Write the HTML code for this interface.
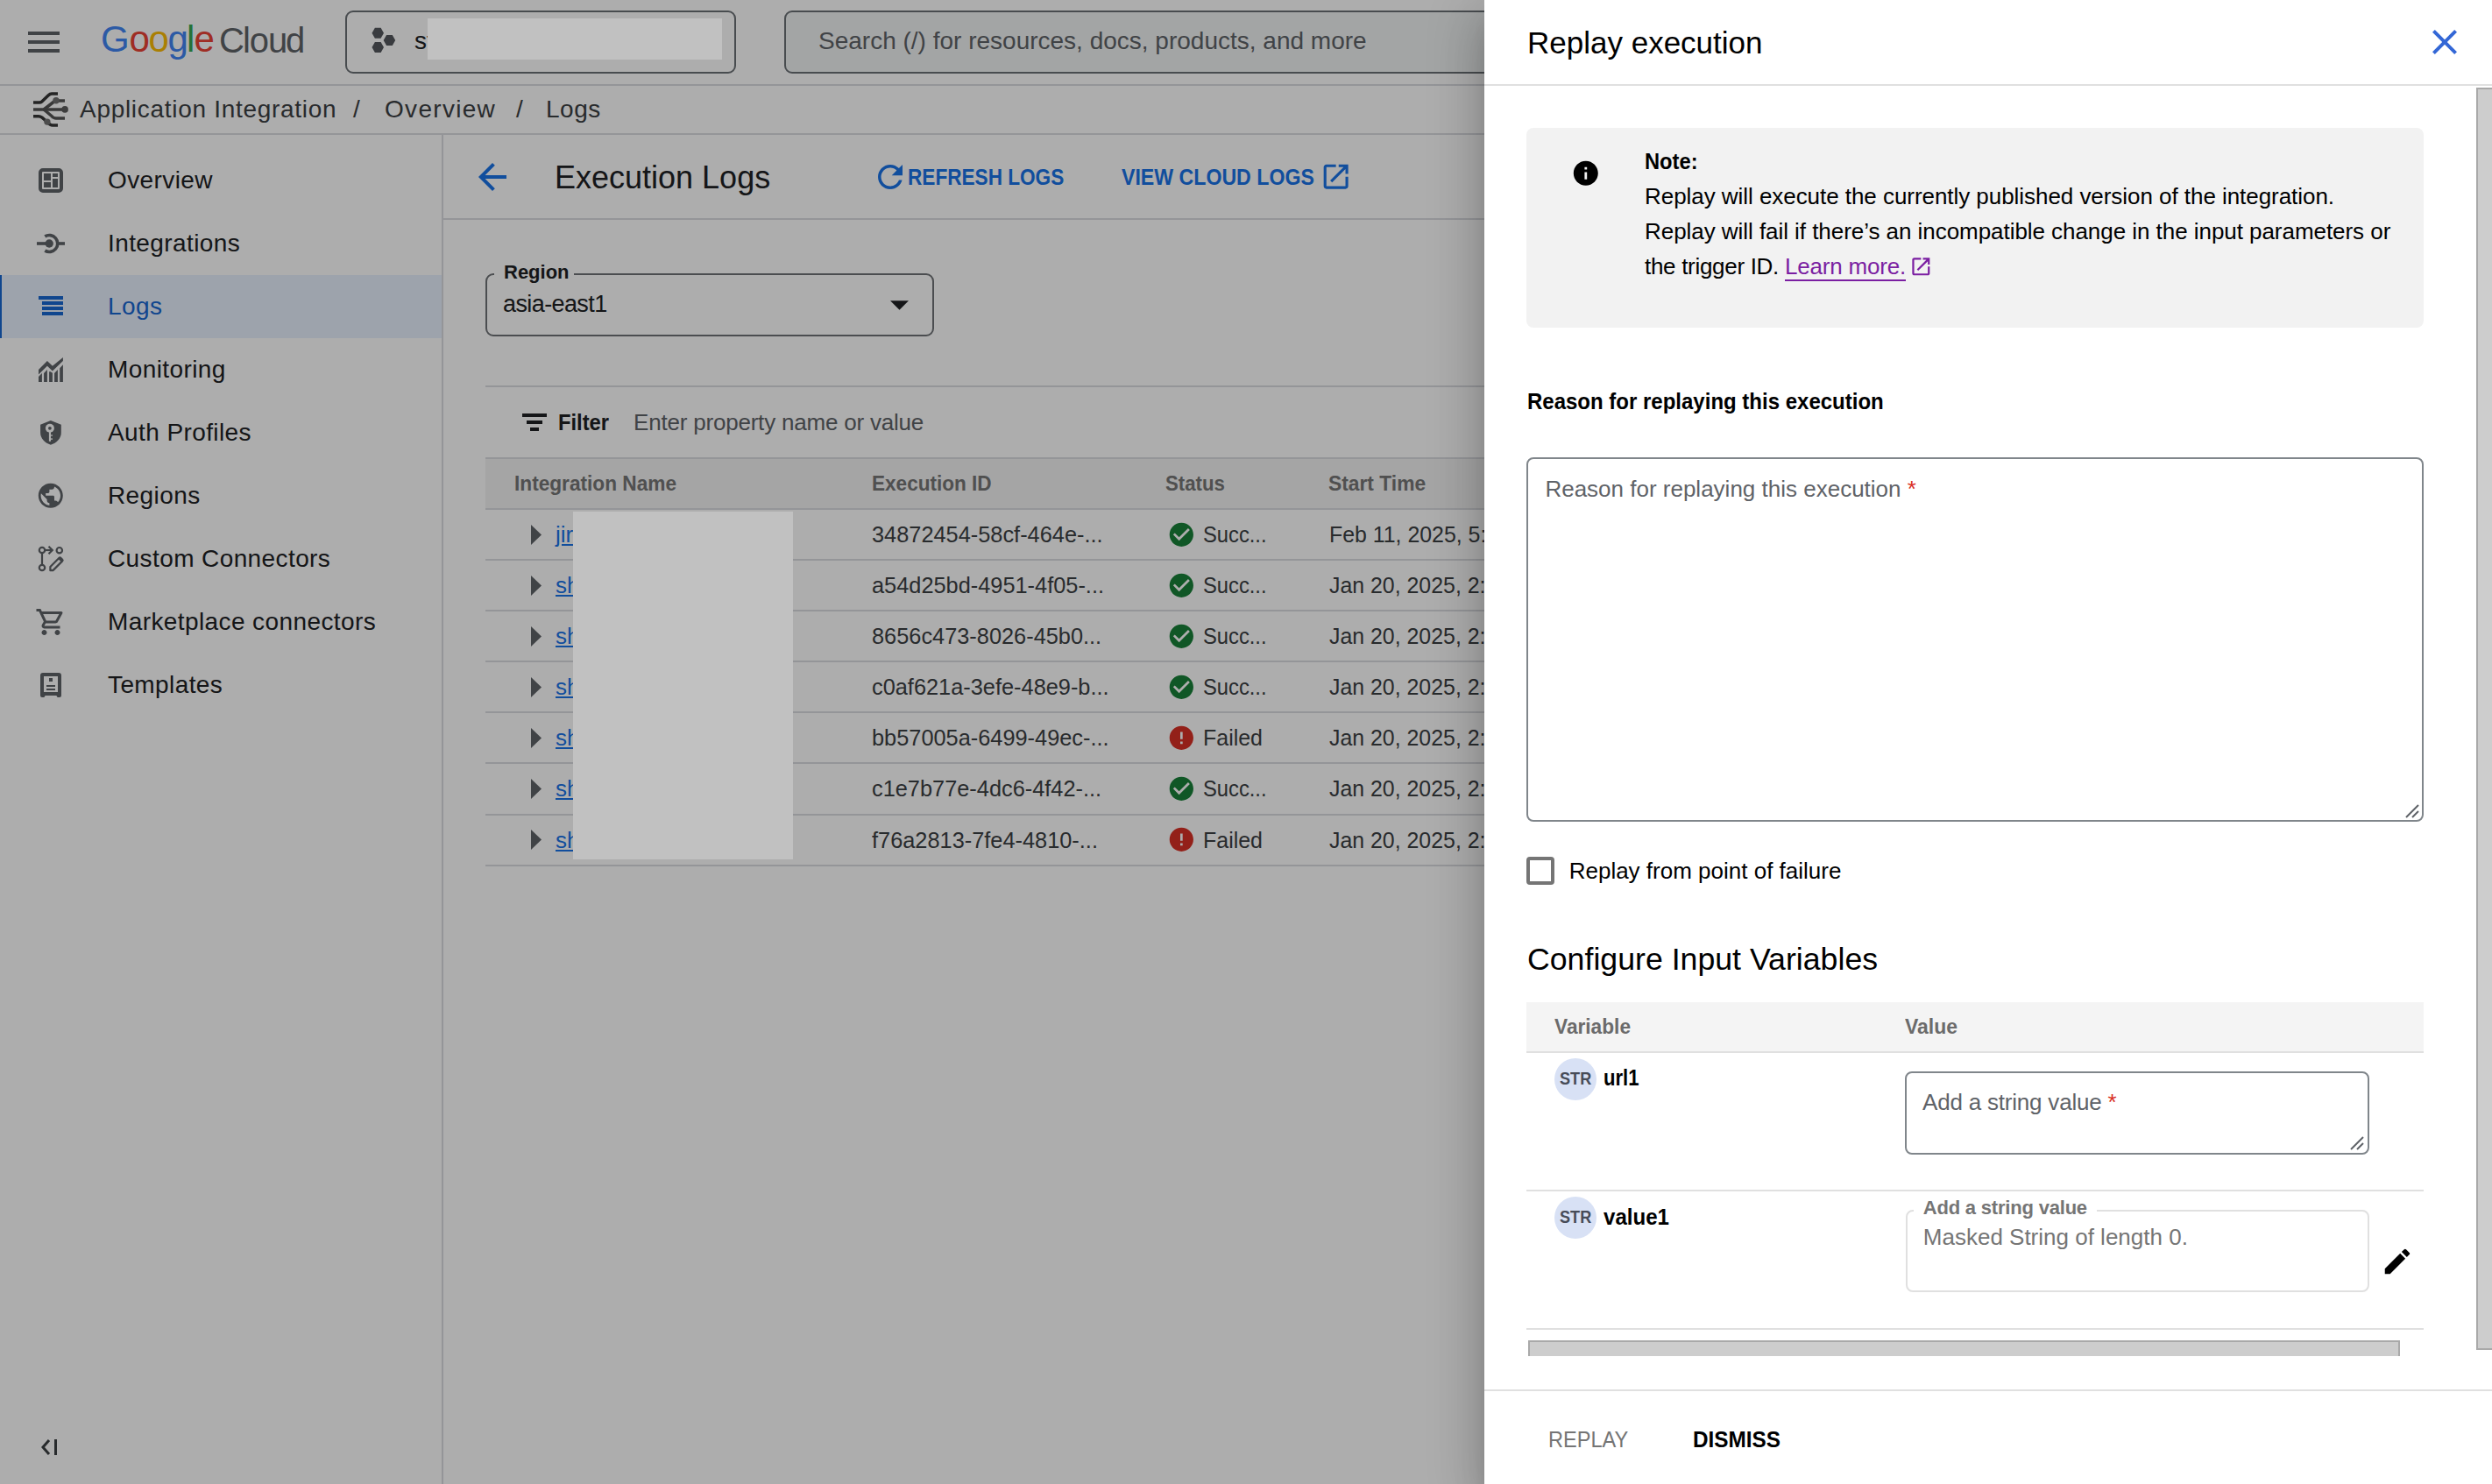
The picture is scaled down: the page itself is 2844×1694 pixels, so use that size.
<!DOCTYPE html>
<html><head><meta charset="utf-8">
<style>
*{box-sizing:border-box;margin:0;padding:0}
html,body{width:2844px;height:1694px;overflow:hidden;background:#fff;font-family:"Liberation Sans",sans-serif;color:#202124}
.a{position:absolute}
.t{position:absolute;white-space:nowrap;line-height:1;font-size:var(--fs);top:calc(var(--b) - var(--fs)*0.8465)}
.hl{position:absolute;height:2px;background:#dadce0}
.vl{position:absolute;width:2px;background:#dadce0}
svg{position:absolute;display:block}
</style></head><body>
<div id="page" class="a" style="left:0;top:0;width:2844px;height:1694px;background:#fff">
  <!-- top bar -->
  <svg style="left:32px;top:36px" width="36" height="24"><rect x="0" y="0" width="36" height="4" fill="#5f6368"/><rect x="0" y="10" width="36" height="4" fill="#5f6368"/><rect x="0" y="20" width="36" height="4" fill="#5f6368"/></svg>
  <div class="t" style="--fs:42px;--b:59.7px;left:115px;color:#4285f4">G</div><div class="t" style="--fs:42px;--b:59.7px;left:147.4px;color:#ea4335">o</div><div class="t" style="--fs:42px;--b:59.7px;left:169.6px;color:#fbbc05">o</div><div class="t" style="--fs:42px;--b:59.7px;left:191.5px;color:#4285f4">g</div><div class="t" style="--fs:42px;--b:59.7px;left:213px;color:#34a853">l</div><div class="t" style="--fs:42px;--b:59.7px;left:221.6px;color:#ea4335">e</div><div class="t" style="--fs:40px;--b:59.7px;left:250px;color:#5f6368">C</div><div class="t" style="--fs:40px;--b:59.7px;left:277px;color:#5f6368">l</div><div class="t" style="--fs:40px;--b:59.7px;left:284.8px;color:#5f6368">o</div><div class="t" style="--fs:40px;--b:59.7px;left:306px;color:#5f6368">u</div><div class="t" style="--fs:40px;--b:59.7px;left:326px;color:#5f6368">d</div>
  <div class="a" style="left:394px;top:12px;width:446px;height:72px;border:2px solid #6b7075;border-radius:9px"></div>
  <svg style="left:424px;top:31px" width="28" height="30" viewBox="0 0 28 30"><polygon fill="#54585d" points="3.9,0.7 10.6,0.7 14,6.7 10.6,12.7 3.9,12.7 0.5,6.7"/><polygon fill="#54585d" points="3.9,17 10.6,17 14,23 10.6,29 3.9,29 0.5,23"/><polygon fill="#54585d" points="17.1,9 23.8,9 27.2,15 23.8,21 17.1,21 13.7,15"/></svg>
  <div class="t" style="--fs:28px;--b:57px;left:473px;color:#202124">st</div>
  <div class="a" style="left:895px;top:12px;width:1000px;height:72px;border:2px solid #6b7075;border-radius:9px;background:#f1f3f4"></div>
  <div class="t" style="--fs:28px;--b:57px;left:934px;color:#5f6368">Search (/) for resources, docs, products, and more</div>
  <div class="hl" style="left:0;top:96px;width:2844px"></div>
  <!-- breadcrumb -->
  <svg style="left:30px;top:100px" width="60" height="50" viewBox="30 100 60 50"><g fill="none" stroke-width="3.5" stroke-linejoin="round"><path d="M38 117 H45 Q46.5 117 48 115.8 L55 109 Q57 107 59 107 H66" stroke="#363636"/><path d="M38 132.7 H44 Q46 132.7 48 134.2 L53 138.5 Q57 143 60 143 H66" stroke="#363636"/><path d="M38 125 H74" stroke="#555"/><path d="M50 125 L61 116.5 Q63 115 65 115 H74" stroke="#555"/><path d="M50 125 L59 132.5 Q61 135 64 135 H74" stroke="#555"/></g><circle cx="64" cy="114.8" r="3.7" fill="#707070"/><circle cx="74.1" cy="124.9" r="3.8" fill="#5c5c5c"/><circle cx="53.9" cy="139.1" r="3.7" fill="#707070"/></svg>
  <div class="t" style="--fs:28px;--b:135px;left:91px;color:#3c4043;letter-spacing:0.7px">Application Integration</div>
  <div class="t" style="--fs:28px;--b:135px;left:403px;color:#3c4043">/</div>
  <div class="t" style="--fs:28px;--b:135px;left:439px;color:#3c4043;letter-spacing:1.3px">Overview</div>
  <div class="t" style="--fs:28px;--b:135px;left:589px;color:#3c4043">/</div>
  <div class="t" style="--fs:28px;--b:135px;left:623px;color:#3c4043;letter-spacing:0.5px">Logs</div>
  <div class="hl" style="left:0;top:152px;width:2844px"></div>
  <!-- sidebar -->
  <div class="vl" style="left:504px;top:153px;height:1541px"></div>
  <div class="a" style="left:0;top:314px;width:504px;height:72px;background:#e8f0fe"></div>
  <div class="a" style="left:0;top:314px;width:2px;height:72px;background:#1967d2"></div>
    <svg style="left:44px;top:192px" width="28" height="28" viewBox="0 0 28 28"><rect x="2" y="2" width="24" height="24" rx="3" fill="none" stroke="#5f6368" stroke-width="4"/><rect x="6" y="6" width="8" height="8" fill="#5f6368"/><rect x="6" y="16" width="8" height="6" fill="#5f6368"/><rect x="16" y="6" width="6" height="4" fill="#5f6368"/><rect x="16" y="12" width="6" height="10" fill="#5f6368"/></svg>
  <div class="t" style="--fs:28px;--b:216px;left:123px;letter-spacing:0.4px">Overview</div>
  <svg style="left:42px;top:264px" width="32" height="28" viewBox="0 0 32 28"><rect x="0" y="12.2" width="13" height="3.6" fill="#5f6368"/><rect x="23" y="12.2" width="9" height="3.6" fill="#5f6368"/><circle cx="14.2" cy="14" r="4.7" fill="#5f6368"/><path d="M9.3 5.9 A9.5 9.5 0 1 1 9.3 22.1" fill="none" stroke="#5f6368" stroke-width="3.6"/></svg>
  <div class="t" style="--fs:28px;--b:288px;left:123px;letter-spacing:0.4px">Integrations</div>
  <svg style="left:44px;top:338px" width="28" height="22" viewBox="0 0 28 22"><rect x="0" y="0" width="28" height="4" fill="#1967d2"/><rect x="4" y="6" width="24" height="4" fill="#1967d2"/><rect x="4" y="12" width="24" height="4" fill="#1967d2"/><rect x="4" y="18" width="24" height="4" fill="#1967d2"/></svg>
  <div class="t" style="--fs:28px;--b:360px;left:123px;letter-spacing:0.4px;color:#1967d2">Logs</div>
  <svg style="left:36px;top:400px" width="44" height="44" viewBox="36 400 44 44"><path fill="#5f6368" d="M44 421.9 L53.9 412 L59.9 417.8 L71.9 408 V411.9 L59.9 423.4 L53.9 417.8 L44 427.4 Z M44 435.9 V430 L47.9 426 V435.9 Z M50.1 435.9 V426 L53.9 422 V435.9 Z M56.1 435.9 V424.2 L57.6 424.2 L59.9 425.8 V435.9 Z M62.1 435.9 V426 L65.9 422 V435.9 Z M68.2 435.9 V420.3 L71.9 416.2 V435.9 Z"/></svg>
  <div class="t" style="--fs:28px;--b:432px;left:123px;letter-spacing:0.4px">Monitoring</div>
  <svg style="left:36px;top:474px" width="44" height="40" viewBox="36 474 44 40"><path fill="#5f6368" d="M57.9 479.9 L69.8 484.8 V494 C69.8 500.5 64.5 505.8 57.9 507.7 C51.3 505.8 46.1 500.5 46.1 494 V484.8 Z"/><circle cx="56.9" cy="488.8" r="5" fill="#fff"/><circle cx="56.9" cy="488.8" r="1.9" fill="#5f6368"/><rect x="55.9" y="492.5" width="2.1" height="11.3" fill="#fff"/><rect x="57.9" y="496.4" width="2.1" height="1.3" fill="#fff"/><rect x="57.9" y="500.4" width="2.1" height="1.4" fill="#fff"/></svg>
  <div class="t" style="--fs:28px;--b:504px;left:123px;letter-spacing:0.4px">Auth Profiles</div>
  <svg style="left:41.2px;top:548.8px" width="33.6" height="33.6" viewBox="0 0 24 24"><path fill="#5f6368" d="M12 2C6.48 2 2 6.48 2 12s4.48 10 10 10 10-4.48 10-10S17.52 2 12 2zm-1 17.93c-3.95-.49-7-3.85-7-7.930 0-.62.08-1.21.21-1.79L9 15v1c0 1.1.9 2 2 2v1.93zm6.9-2.54c-.26-.81-1-1.39-1.9-1.39h-1v-3c0-.55-.45-1-1-1H8v-2h2c.55 0 1-.45 1-1V7h2c1.1 0 2-.9 2-2v-.41c2.93 1.19 5 4.06 5 7.41 0 2.08-.8 3.97-2.1 5.39z"/></svg>
  <div class="t" style="--fs:28px;--b:576px;left:123px;letter-spacing:0.4px">Regions</div>
  <svg style="left:30px;top:610px" width="60" height="60" viewBox="30 610 60 60"><g fill="none" stroke="#5f6368" stroke-width="2.2"><circle cx="48" cy="628" r="3.2"/><circle cx="48" cy="648" r="3.2"/><circle cx="67.8" cy="628.2" r="3.2"/><path d="M48 631.2 V644.8"/><path d="M51.2 628 H60"/><path d="M55.5 623.7 L59.8 628 L55.5 632.3"/><path d="M57.4 651.2 V647 L67.6 636.8 Q68.4 636 69.2 636.8 L71.2 638.8 Q72 639.6 71.2 640.4 L61 650.6 Q60.4 651.2 59.6 651.2 Z" stroke-linejoin="round"/><path d="M66.4 638 L68.4 636 L71.9 639.5 L69.9 641.5z" fill="#5f6368" stroke="none"/></g></svg>
  <div class="t" style="--fs:28px;--b:648px;left:123px;letter-spacing:0.4px">Custom Connectors</div>
  <svg style="left:39.7px;top:692.1px" width="36" height="36" viewBox="0 0 24 24"><path fill="#5f6368" d="M7 22q-.825 0-1.412-.587Q5 20.825 5 20q0-.825.588-1.413Q6.175 18 7 18t1.412.587Q9 19.175 9 20q0 .825-.588 1.413Q7.825 22 7 22Zm10 0q-.825 0-1.412-.587Q15 20.825 15 20q0-.825.588-1.413Q16.175 18 17 18t1.413.587Q19 19.175 19 20q0 .825-.587 1.413Q17.825 22 17 22ZM6.15 6l2.4 5h7l2.750-5ZM5.2 4h14.75q.575 0 .875.512.3.513.025 1.038l-3.550 6.4q-.275.5-.738.775Q16.1 13 15.55 13H8.1L7 15h12v2H7q-1.125 0-1.7-.988-.575-.987-.05-1.962L6.6 11.6 3 4H1V2h3.25Z"/></svg>
  <div class="t" style="--fs:28px;--b:720px;left:123px;letter-spacing:0.4px">Marketplace connectors</div>
  <svg style="left:46px;top:768px" width="24" height="28" viewBox="0 0 24 28"><path fill="#5f6368" fill-rule="evenodd" d="M3 0 H21 Q24 0 24 3 V26 Q24 28 22 28 H20 Q19 28 18.5 26 H5.5 Q5 28 4 28 H2 Q0 28 0 26 V3 Q0 0 3 0z M4 4 V22 H20 V4z"/><rect x="10" y="6" width="4" height="4" fill="#5f6368"/><rect x="7" y="14" width="10" height="2" fill="#5f6368"/><rect x="7" y="18" width="10" height="2" fill="#5f6368"/></svg>
  <div class="t" style="--fs:28px;--b:792px;left:123px;letter-spacing:0.4px">Templates</div>

  <!-- content header -->
  <svg style="left:538px;top:178px" width="48" height="48" viewBox="0 0 24 24"><path fill="#1a73e8" d="M20 11H7.83l5.59-5.59L12 4l-8 8 8 8 1.41-1.41L7.83 13H20v-2z"/></svg>
  <div class="t" style="--fs:36px;--b:215px;left:633px;color:#202124">Execution Logs</div>
  <svg style="left:994.9px;top:180.9px" width="42" height="42" viewBox="0 0 24 24"><path fill="#1a73e8" d="M17.65 6.35C16.2 4.9 14.21 4 12 4c-4.42 0-7.990 3.58-7.99 8s3.57 8 7.99 8c3.73 0 6.84-2.55 7.73-6h-2.08c-.82 2.33-3.04 4-5.65 4-3.31 0-6-2.69-6-6s2.69-6 6-6c1.660 0 3.14.69 4.22 1.78L13 11h7V4l-2.35 2.35z"/></svg>
  <div class="t" style="--fs:26px;--b:211px;left:1036px;color:#1a73e8;font-weight:700;transform:scaleX(0.869);transform-origin:0 0">REFRESH LOGS</div>
  <div class="t" style="--fs:26px;--b:211px;left:1280px;color:#1a73e8;font-weight:700;transform:scaleX(0.89);transform-origin:0 0">VIEW CLOUD LOGS</div>
  <svg style="left:1506.2px;top:183.1px" width="37.3" height="37.3" viewBox="0 0 24 24"><path fill="#1a73e8" d="M19 19H5V5h7V3H5c-1.11 0-2 .9-2 2v14c0 1.1.89 2 2 2h14c1.1 0 2-.9 2-2v-7h-2v7zM14 3v2h3.59l-9.83 9.83 1.41 1.41L19 6.410V10h2V3h-7z"/></svg>
  <div class="hl" style="left:505px;top:249px;width:2339px"></div>
  <!-- region select -->
  <div class="a" style="left:554px;top:312px;width:512px;height:72px;border:2px solid #6f7276;border-radius:9px"></div>
  <div class="a" style="left:564px;top:306px;width:91px;height:12px;background:#fff"></div>
  <div class="t" style="--fs:22px;--b:319px;left:575px;color:#202124;font-weight:700">Region</div>
  <div class="t" style="--fs:27px;--b:357px;left:574px;color:#202124;letter-spacing:-0.6px">asia-east1</div>
  <svg style="left:1016px;top:343px" width="21" height="11" viewBox="0 0 20 10"><path d="M0 0 L20 0 L10 10z" fill="#202124"/></svg>
  <div class="hl" style="left:554px;top:440px;width:2290px"></div>
  <!-- filter -->
  <svg style="left:596px;top:472px" width="28" height="20" viewBox="0 0 28 20"><rect x="0" y="0" width="28" height="4" fill="#202124"/><rect x="5" y="8" width="18" height="4" fill="#202124"/><rect x="9" y="16" width="10" height="4" fill="#202124"/></svg>
  <div class="t" style="--fs:26px;--b:491px;left:637px;color:#202124;font-weight:700;transform:scaleX(0.912);transform-origin:0 0">Filter</div>
  <div class="t" style="--fs:26px;--b:491px;left:723px;color:#5f6368;letter-spacing:-0.2px">Enter property name or value</div>
  <!-- table -->
  <div class="a" style="left:554px;top:522px;width:2290px;height:60px;background:#f3f3f3;border-top:2px solid #dadce0;border-bottom:2px solid #dadce0"></div>
    <div class="t" style="--fs:24px;--b:560px;left:587px;color:#767676;font-weight:700;transform:scaleX(0.944);transform-origin:0 0">Integration Name</div>
  <div class="t" style="--fs:24px;--b:560px;left:995px;color:#767676;font-weight:700;transform:scaleX(0.94);transform-origin:0 0">Execution ID</div>
  <div class="t" style="--fs:24px;--b:560px;left:1330px;color:#767676;font-weight:700;transform:scaleX(0.926);transform-origin:0 0">Status</div>
  <div class="t" style="--fs:24px;--b:560px;left:1516px;color:#767676;font-weight:700;transform:scaleX(0.95);transform-origin:0 0">Start Time</div>
  <div class="hl" style="left:554px;top:638.0px;width:1140px"></div>
  <svg style="left:606px;top:598.5px" width="12" height="23" viewBox="0 0 12 23"><path d="M0 0 L12 11.5 L0 23z" fill="#5f6368"/></svg>
  <div class="t" style="--fs:26px;--b:619.0px;left:634px;color:#1a73e8;text-decoration:underline">jira</div>
  <div class="t" style="--fs:26px;--b:619.0px;left:995px;color:#3c4043;transform:scaleX(0.975);transform-origin:0 0">34872454-58cf-464e-...</div>
  <svg style="left:1331.7px;top:593.7px" width="32.7" height="32.7" viewBox="0 0 24 24"><path fill="#188038" d="M12 2C6.48 2 2 6.48 2 12s4.48 10 10 10 10-4.48 10-10S17.52 2 12 2zm-2 15l-5-5 1.41-1.41L10 14.17l7.59-7.59L19 8l-9 9z"/></svg>
  <div class="t" style="--fs:26px;--b:619.0px;left:1373px;color:#3c4043;transform:scaleX(0.913);transform-origin:0 0">Succ...</div>
  <div class="t" style="--fs:26px;--b:619.0px;left:1517px;color:#3c4043;transform:scaleX(0.957);transform-origin:0 0">Feb 11, 2025, 5:</div>
  <div class="hl" style="left:554px;top:696.1px;width:1140px"></div>
  <svg style="left:606px;top:656.6px" width="12" height="23" viewBox="0 0 12 23"><path d="M0 0 L12 11.5 L0 23z" fill="#5f6368"/></svg>
  <div class="t" style="--fs:26px;--b:677.1px;left:634px;color:#1a73e8;text-decoration:underline">sh</div>
  <div class="t" style="--fs:26px;--b:677.1px;left:995px;color:#3c4043;transform:scaleX(0.975);transform-origin:0 0">a54d25bd-4951-4f05-...</div>
  <svg style="left:1331.7px;top:651.8px" width="32.7" height="32.7" viewBox="0 0 24 24"><path fill="#188038" d="M12 2C6.48 2 2 6.48 2 12s4.48 10 10 10 10-4.48 10-10S17.52 2 12 2zm-2 15l-5-5 1.41-1.41L10 14.17l7.59-7.59L19 8l-9 9z"/></svg>
  <div class="t" style="--fs:26px;--b:677.1px;left:1373px;color:#3c4043;transform:scaleX(0.913);transform-origin:0 0">Succ...</div>
  <div class="t" style="--fs:26px;--b:677.1px;left:1517px;color:#3c4043;transform:scaleX(0.957);transform-origin:0 0">Jan 20, 2025, 2:</div>
  <div class="hl" style="left:554px;top:754.2px;width:1140px"></div>
  <svg style="left:606px;top:714.7px" width="12" height="23" viewBox="0 0 12 23"><path d="M0 0 L12 11.5 L0 23z" fill="#5f6368"/></svg>
  <div class="t" style="--fs:26px;--b:735.2px;left:634px;color:#1a73e8;text-decoration:underline">sh</div>
  <div class="t" style="--fs:26px;--b:735.2px;left:995px;color:#3c4043;transform:scaleX(0.975);transform-origin:0 0">8656c473-8026-45b0...</div>
  <svg style="left:1331.7px;top:709.9px" width="32.7" height="32.7" viewBox="0 0 24 24"><path fill="#188038" d="M12 2C6.48 2 2 6.48 2 12s4.48 10 10 10 10-4.48 10-10S17.52 2 12 2zm-2 15l-5-5 1.41-1.41L10 14.17l7.59-7.59L19 8l-9 9z"/></svg>
  <div class="t" style="--fs:26px;--b:735.2px;left:1373px;color:#3c4043;transform:scaleX(0.913);transform-origin:0 0">Succ...</div>
  <div class="t" style="--fs:26px;--b:735.2px;left:1517px;color:#3c4043;transform:scaleX(0.957);transform-origin:0 0">Jan 20, 2025, 2:</div>
  <div class="hl" style="left:554px;top:812.3px;width:1140px"></div>
  <svg style="left:606px;top:772.8px" width="12" height="23" viewBox="0 0 12 23"><path d="M0 0 L12 11.5 L0 23z" fill="#5f6368"/></svg>
  <div class="t" style="--fs:26px;--b:793.3px;left:634px;color:#1a73e8;text-decoration:underline">sh</div>
  <div class="t" style="--fs:26px;--b:793.3px;left:995px;color:#3c4043;transform:scaleX(0.975);transform-origin:0 0">c0af621a-3efe-48e9-b...</div>
  <svg style="left:1331.7px;top:768.0px" width="32.7" height="32.7" viewBox="0 0 24 24"><path fill="#188038" d="M12 2C6.48 2 2 6.48 2 12s4.48 10 10 10 10-4.48 10-10S17.52 2 12 2zm-2 15l-5-5 1.41-1.41L10 14.17l7.59-7.59L19 8l-9 9z"/></svg>
  <div class="t" style="--fs:26px;--b:793.3px;left:1373px;color:#3c4043;transform:scaleX(0.913);transform-origin:0 0">Succ...</div>
  <div class="t" style="--fs:26px;--b:793.3px;left:1517px;color:#3c4043;transform:scaleX(0.957);transform-origin:0 0">Jan 20, 2025, 2:</div>
  <div class="hl" style="left:554px;top:870.4px;width:1140px"></div>
  <svg style="left:606px;top:830.9px" width="12" height="23" viewBox="0 0 12 23"><path d="M0 0 L12 11.5 L0 23z" fill="#5f6368"/></svg>
  <div class="t" style="--fs:26px;--b:851.4px;left:634px;color:#1a73e8;text-decoration:underline">sh</div>
  <div class="t" style="--fs:26px;--b:851.4px;left:995px;color:#3c4043;transform:scaleX(0.975);transform-origin:0 0">bb57005a-6499-49ec-...</div>
  <svg style="left:1331.7px;top:826.1px" width="32.7" height="32.7" viewBox="0 0 24 24"><path fill="#d93025" d="M12 2C6.48 2 2 6.48 2 12s4.48 10 10 10 10-4.48 10-10S17.52 2 12 2zm1 15h-2v-2h2v2zm0-4h-2V7h2v6z"/></svg>
  <div class="t" style="--fs:26px;--b:851.4px;left:1373px;color:#3c4043;transform:scaleX(0.96);transform-origin:0 0">Failed</div>
  <div class="t" style="--fs:26px;--b:851.4px;left:1517px;color:#3c4043;transform:scaleX(0.957);transform-origin:0 0">Jan 20, 2025, 2:</div>
  <div class="hl" style="left:554px;top:928.5px;width:1140px"></div>
  <svg style="left:606px;top:889.0px" width="12" height="23" viewBox="0 0 12 23"><path d="M0 0 L12 11.5 L0 23z" fill="#5f6368"/></svg>
  <div class="t" style="--fs:26px;--b:909.5px;left:634px;color:#1a73e8;text-decoration:underline">sh</div>
  <div class="t" style="--fs:26px;--b:909.5px;left:995px;color:#3c4043;transform:scaleX(0.975);transform-origin:0 0">c1e7b77e-4dc6-4f42-...</div>
  <svg style="left:1331.7px;top:884.2px" width="32.7" height="32.7" viewBox="0 0 24 24"><path fill="#188038" d="M12 2C6.48 2 2 6.48 2 12s4.48 10 10 10 10-4.48 10-10S17.52 2 12 2zm-2 15l-5-5 1.41-1.41L10 14.17l7.59-7.59L19 8l-9 9z"/></svg>
  <div class="t" style="--fs:26px;--b:909.5px;left:1373px;color:#3c4043;transform:scaleX(0.913);transform-origin:0 0">Succ...</div>
  <div class="t" style="--fs:26px;--b:909.5px;left:1517px;color:#3c4043;transform:scaleX(0.957);transform-origin:0 0">Jan 20, 2025, 2:</div>
  <div class="hl" style="left:554px;top:986.6px;width:1140px"></div>
  <svg style="left:606px;top:947.1px" width="12" height="23" viewBox="0 0 12 23"><path d="M0 0 L12 11.5 L0 23z" fill="#5f6368"/></svg>
  <div class="t" style="--fs:26px;--b:967.6px;left:634px;color:#1a73e8;text-decoration:underline">sh</div>
  <div class="t" style="--fs:26px;--b:967.6px;left:995px;color:#3c4043;transform:scaleX(0.975);transform-origin:0 0">f76a2813-7fe4-4810-...</div>
  <svg style="left:1331.7px;top:942.3px" width="32.7" height="32.7" viewBox="0 0 24 24"><path fill="#d93025" d="M12 2C6.48 2 2 6.48 2 12s4.48 10 10 10 10-4.48 10-10S17.52 2 12 2zm1 15h-2v-2h2v2zm0-4h-2V7h2v6z"/></svg>
  <div class="t" style="--fs:26px;--b:967.6px;left:1373px;color:#3c4043;transform:scaleX(0.96);transform-origin:0 0">Failed</div>
  <div class="t" style="--fs:26px;--b:967.6px;left:1517px;color:#3c4043;transform:scaleX(0.957);transform-origin:0 0">Jan 20, 2025, 2:</div>
  <!-- collapse -->
  <svg style="left:46px;top:1642px" width="22" height="20" viewBox="0 0 22 20"><path d="M10 2 L3 10 L10 18" fill="none" stroke="#3c4043" stroke-width="3"/><rect x="16" y="1" width="3" height="18" fill="#3c4043"/></svg>
</div>
<!-- scrim -->
<div class="a" style="left:0;top:0;width:2844px;height:1694px;background:rgba(0,0,0,0.32)"></div>
<!-- redaction boxes -->
<div class="a" style="left:488px;top:21px;width:336px;height:47px;background:#c1c1c1"></div>
<div class="a" style="left:654px;top:584px;width:251px;height:397px;background:#c1c1c1"></div>

<!-- side panel -->
<div id="panel" class="a" style="left:1694px;top:0;width:1150px;height:1694px;background:#fff;box-shadow:0 16px 20px -10px rgba(0,0,0,.2),0 32px 48px 4px rgba(0,0,0,.14),0 12px 60px 10px rgba(0,0,0,.12)">
  <div class="t" style="--fs:35px;--b:61px;left:49px;color:#000">Replay execution</div>
  <svg style="left:1072.2px;top:24px" width="48" height="48" viewBox="0 0 24 24"><path fill="#3367d6" d="M19 6.41L17.59 5 12 10.59 6.41 5 5 6.41 10.59 12 5 17.59 6.41 19 12 13.41 17.59 19 19 17.59 13.41 12z"/></svg>
  <div class="hl" style="left:0;top:96px;width:1150px;background:#e0e0e0"></div>
  <div class="a" style="left:1132px;top:100px;width:18px;height:1441px;background:#cdcdcd;border-left:2px solid #a9a9a9;border-top:2px solid #a9a9a9;border-bottom:2px solid #a9a9a9"></div>
  <!-- note -->
  <div class="a" style="left:48px;top:146px;width:1024px;height:228px;background:#f2f2f2;border-radius:8px"></div>
  <svg style="left:99px;top:180.8px" width="33.6" height="33.6" viewBox="0 0 24 24"><path fill="#000" d="M12 2C6.48 2 2 6.48 2 12s4.48 10 10 10 10-4.48 10-10S17.52 2 12 2zm1 15h-2v-6h2v6zm0-8h-2V7h2v2z"/></svg>
  <div class="t" style="--fs:26px;--b:193.4px;left:183px;color:#000;font-weight:700;transform:scaleX(0.911);transform-origin:0 0">Note:</div>
  <div class="t" style="--fs:26px;--b:233px;left:183px;color:#000;letter-spacing:-0.05px">Replay will execute the currently published version of the integration.</div>
  <div class="t" style="--fs:26px;--b:273px;left:183px;color:#000;letter-spacing:-0.05px">Replay will fail if there’s an incompatible change in the input parameters or</div>
  <div class="t" style="--fs:26px;--b:313px;left:183px;color:#000;letter-spacing:-0.3px">the trigger ID.</div>
  <div class="t" style="--fs:26px;--b:313px;left:343px;color:#7b1fa2;letter-spacing:-0.2px">Learn more.</div>
  <div class="a" style="left:343px;top:318.5px;width:138px;height:2px;background:#7b1fa2"></div>
  <svg style="left:485px;top:291.2px" width="26.7" height="26.7" viewBox="0 0 24 24"><path fill="#7b1fa2" d="M19 19H5V5h7V3H5c-1.11 0-2 .9-2 2v14c0 1.1.89 2 2 2h14c1.1 0 2-.9 2-2v-7h-2v7zM14 3v2h3.590l-9.83 9.83 1.41 1.41L19 6.41V10h2V3h-7z"/></svg>
  <!-- reason -->
  <div class="t" style="--fs:26px;--b:467.4px;left:49px;color:#000;font-weight:700;transform:scaleX(0.923);transform-origin:0 0">Reason for replaying this execution</div>
  <div class="a" style="left:48px;top:522px;width:1024px;height:416px;border:2px solid #80868b;border-radius:8px"></div>
  <div class="t" style="--fs:26px;--b:567.2px;left:69.4px;color:#5f6368">Reason for replaying this execution <span style="color:#d93025">*</span></div>
  <svg style="left:1050px;top:917px" width="18" height="18" viewBox="0 0 18 18"><path d="M2 16 L16 2 M9 16 L16 9" stroke="#5f6368" stroke-width="2"/></svg>
  <!-- checkbox -->
  <div class="a" style="left:48px;top:978px;width:32px;height:32px;border:4px solid #757575;border-radius:4px"></div>
  <div class="t" style="--fs:26px;--b:1003.5px;left:96.7px;color:#000">Replay from point of failure</div>
  <!-- configure -->
  <div class="t" style="--fs:35.7px;--b:1108.4px;left:49px;color:#000">Configure Input Variables</div>
  <div class="a" style="left:48px;top:1144px;width:1024px;height:58px;background:#f4f4f4;border-bottom:2px solid #e0e0e0"></div>
  <div class="t" style="--fs:24px;--b:1180px;left:80.4px;color:#6b6b6b;font-weight:700;transform:scaleX(0.945);transform-origin:0 0">Variable</div>
  <div class="t" style="--fs:24px;--b:1180px;left:480px;color:#6b6b6b;font-weight:700;transform:scaleX(0.957);transform-origin:0 0">Value</div>
  <!-- row 1 -->
  <div class="a" style="left:80px;top:1208px;width:48px;height:48px;border-radius:50%;background:#d8e1f5"></div>
  <div class="t" style="--fs:20px;--b:1237.5px;left:86px;color:#474c58;font-weight:700;transform:scaleX(0.905);transform-origin:0 0">STR</div>
  <div class="t" style="--fs:26px;--b:1239px;left:135.7px;color:#000;font-weight:700;transform:scaleX(0.85);transform-origin:0 0">url1</div>
  <div class="a" style="left:480px;top:1223px;width:530px;height:95px;border:2px solid #80868b;border-radius:8px"></div>
  <div class="t" style="--fs:26px;--b:1267px;left:500px;color:#5f6368;letter-spacing:-0.2px">Add a string value <span style="color:#d93025">*</span></div>
  <svg style="left:987px;top:1296px" width="18" height="18" viewBox="0 0 18 18"><path d="M2 16 L16 2 M9 16 L16 9" stroke="#5f6368" stroke-width="2"/></svg>
  <div class="hl" style="left:48px;top:1358px;width:1024px;background:#e0e0e0"></div>
  <!-- row 2 -->
  <div class="a" style="left:80px;top:1366px;width:48px;height:48px;border-radius:50%;background:#d8e1f5"></div>
  <div class="t" style="--fs:20px;--b:1395.5px;left:86px;color:#474c58;font-weight:700;transform:scaleX(0.905);transform-origin:0 0">STR</div>
  <div class="t" style="--fs:26px;--b:1398px;left:135.7px;color:#000;font-weight:700;transform:scaleX(0.926);transform-origin:0 0">value1</div>
  <div class="a" style="left:481px;top:1381px;width:529px;height:94px;border:2px solid #e0e0e0;border-radius:8px"></div>
  <div class="a" style="left:490px;top:1376px;width:209px;height:10px;background:#fff"></div>
  <div class="t" style="--fs:22px;--b:1386.6px;left:500.8px;color:#757575;font-weight:700;letter-spacing:-0.2px">Add a string value</div>
  <div class="t" style="--fs:26px;--b:1421px;left:500.8px;color:#757575">Masked String of length 0.</div>
  <svg style="left:1023.1px;top:1421.3px" width="37.9" height="37.9" viewBox="0 0 24 24"><path fill="#000" d="M3 17.25V21h3.75L17.81 9.94l-3.75-3.75L3 17.25zM20.71 7.04c.39-.39.39-1.02 0-1.41l-2.34-2.34a.9959.9959 0 0 0-1.41 0l-1.83 1.83 3.75 3.75 1.83-1.83z"/></svg>
  <div class="hl" style="left:48px;top:1516px;width:1024px;background:#e0e0e0"></div>
  <div class="a" style="left:50px;top:1530px;width:995px;height:18px;background:#cdcdcd;border-left:2px solid #a9a9a9;border-top:2px solid #a9a9a9;border-right:2px solid #a9a9a9"></div>
  <div class="hl" style="left:0;top:1586px;width:1150px;background:#e0e0e0"></div>
  <div class="t" style="--fs:26px;--b:1652.2px;left:73px;color:#757575;transform:scaleX(0.907);transform-origin:0 0">REPLAY</div>
  <div class="t" style="--fs:26px;--b:1652.2px;left:238px;color:#000;font-weight:700;transform:scaleX(0.935);transform-origin:0 0">DISMISS</div>
</div>
</body></html>
